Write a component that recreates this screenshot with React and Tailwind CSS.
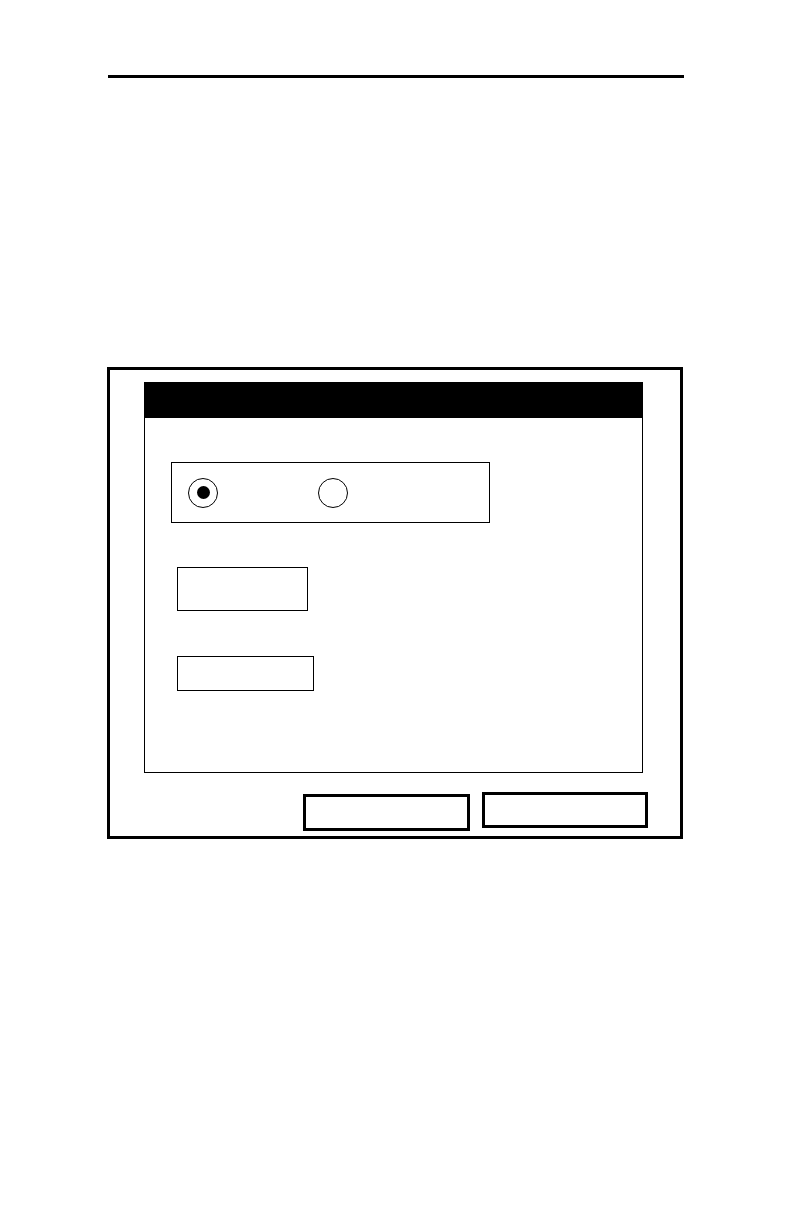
export default function App() {
  return (
    <div className="w-[792px] h-[1224px] bg-white relative overflow-hidden" style={{ fontFamily: '"Liberation Sans", Arial, sans-serif' }}>
      <div className="pt-[75px] pl-[108px]">
        <div className="w-[576px] h-[3px] bg-black" />
      </div>
      <div className="mt-[289px] ml-[107px] w-[576px] h-[472px] border-[3px] border-black box-border">
        <div className="pl-[34px] pt-[12px]">
          <div className="w-[499px] h-[391px] border border-black box-border flex flex-col">
            <div className="h-[36px] bg-black -mx-px -mt-px" />
            <div className="ml-[26px] mt-[44px] w-[319px] h-[61px] border border-black box-border flex items-center">
              <div className="ml-[16px] w-[30px] h-[30px] rounded-full border border-black flex items-center justify-center">
                <div className="w-[13px] h-[13px] rounded-full bg-black" />
              </div>
              <div className="ml-[100px] w-[30px] h-[30px] rounded-full border border-black" />
            </div>
            <div className="ml-[32px] mt-[44px] w-[131px] h-[44px] border border-black box-border" />
            <div className="ml-[32px] mt-[45px] w-[137px] h-[35px] border border-black box-border" />
          </div>
        </div>
        <div className="flex items-start ml-[193px]">
          <div className="mt-[21px] w-[167px] h-[37px] border-[3px] border-black box-border" />
          <div className="mt-[19px] ml-[12px] w-[166px] h-[36px] border-[3px] border-black box-border" />
        </div>
      </div>
    </div>
  );
}
